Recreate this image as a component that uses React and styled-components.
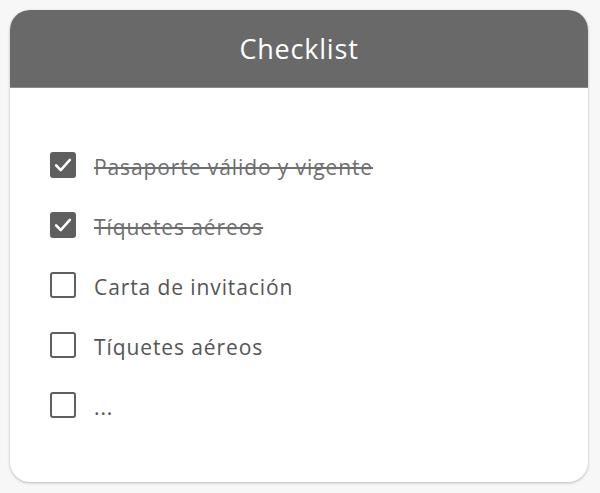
import styled, { createGlobalStyle } from "styled-components";

const GlobalStyle = createGlobalStyle`
  body {
    margin: 0;
    background: #f7f7f7;
    font-family: "Open Sans", Lato, sans-serif;
  }
`;

const items = [
  { label: "Pasaporte válido y vigente", done: true },
  { label: "Tíquetes aéreos", done: true },
  { label: "Carta de invitación", done: false },
  { label: "Tíquetes aéreos", done: false },
  { label: "...", done: false },
];

function Check({ done }) {
  return (
    <Box done={done}>
      {done && (
        <svg width="22" height="22" viewBox="0 0 24 24">
          <path
            d="M4.5 12.5l5 5L19.5 6.5"
            fill="none"
            stroke="#fff"
            strokeWidth="2.8"
            strokeLinecap="round"
            strokeLinejoin="round"
          />
        </svg>
      )}
    </Box>
  );
}

export default function App() {
  return (
    <>
      <GlobalStyle />
      <Page>
        <Card>
          <Header>Checklist</Header>
          <List>
            {items.map((item, i) => (
              <Row key={i}>
                <Check done={item.done} />
                <Label done={item.done}>{item.label}</Label>
              </Row>
            ))}
          </List>
        </Card>
      </Page>
    </>
  );
}

const Page = styled.div`
  padding: 10px 12px 11px 10px;
`;

const Card = styled.div`
  width: 578px;
  height: 472px;
  background: #fff;
  border-radius: 20px;
  overflow: hidden;
  box-shadow: 0 1px 3px rgba(0, 0, 0, 0.25);
  display: flex;
  flex-direction: column;
`;

const Header = styled.div`
  height: 78px;
  background: #696969;
  color: #fff;
  font-size: 27px;
  letter-spacing: 0.8px;
  display: flex;
  align-items: center;
  justify-content: center;
  box-sizing: border-box;
  border-bottom: 1px solid #8a8a8a;
`;

const List = styled.ul`
  list-style: none;
  margin: 0;
  padding: 47px 40px 45px;
`;

const Row = styled.li`
  height: 60px;
  display: flex;
  align-items: center;
  gap: 18px;
`;

const Box = styled.span`
  flex: none;
  width: 26px;
  height: 26px;
  box-sizing: border-box;
  border-radius: 3px;
  border: 2px solid #5f5f5f;
  background: ${({ done }) => (done ? "#5f5f5f" : "transparent")};
  display: flex;
  align-items: center;
  justify-content: center;
`;

const Label = styled.span`
  padding-top: 3px;
  font-size: 21px;
  letter-spacing: 0.9px;
  color: ${({ done }) => (done ? "#6e6e6e" : "#555")};
  text-decoration: ${({ done }) => (done ? "line-through" : "none")};
  text-decoration-thickness: 2px;
`;
